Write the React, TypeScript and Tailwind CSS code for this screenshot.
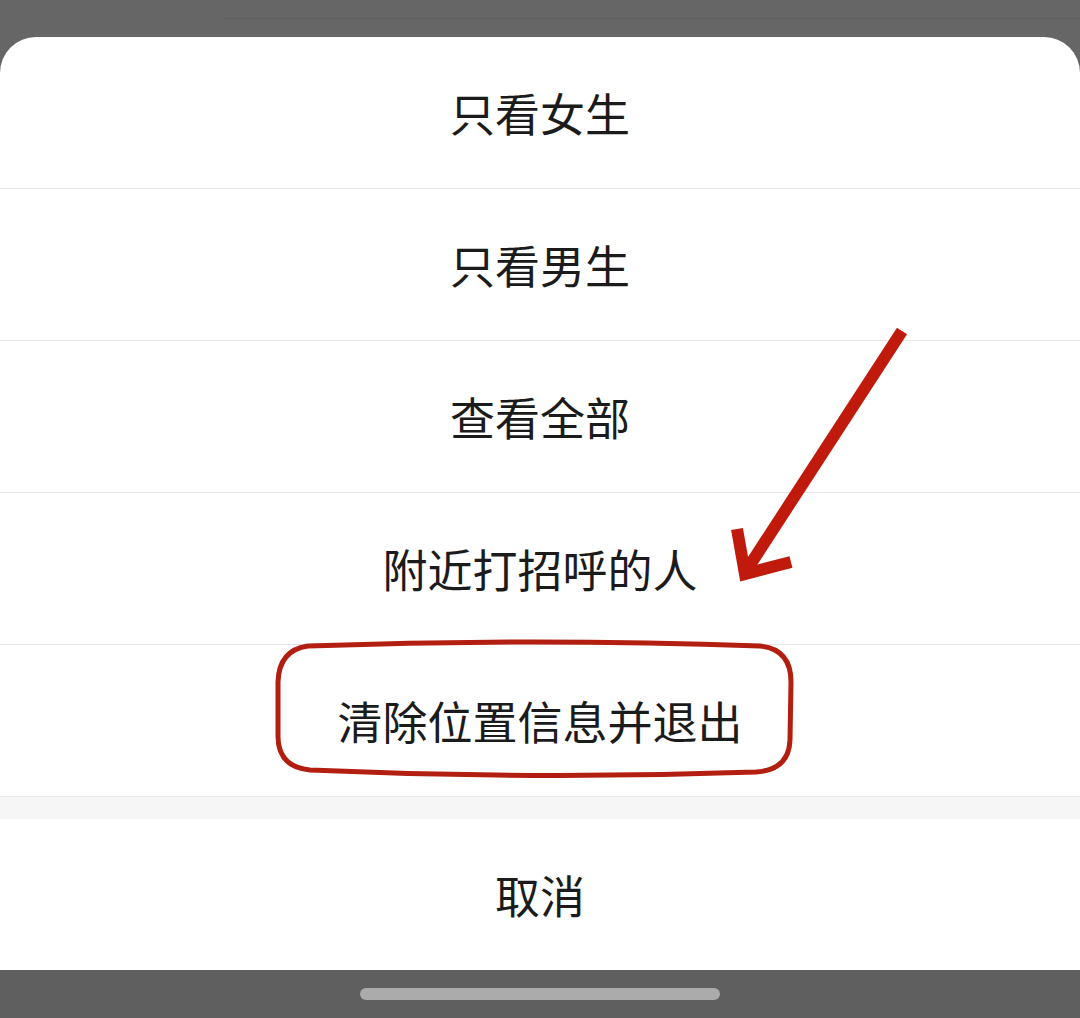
const options: string[] = ['只看女生', '只看男生', '查看全部', '附近打招呼的人', '清除位置信息并退出']

const font = { fontFamily: '"Noto Sans CJK SC", "Noto Sans", sans-serif' }

const App = () => {
  return (
    <div className="relative w-full h-[1018px] flex flex-col bg-[#666666] overflow-hidden" style={font}>
      {/* dimmed page behind the sheet */}
      <div className="h-[37px] shrink-0 pt-[18px] pl-[224px]">
        <div className="h-px bg-[#5e5e5e]" />
      </div>

      {/* action sheet */}
      <div className="flex flex-col bg-white rounded-t-[36px] overflow-hidden">
        <ul>
          {options.map((name, index: number) => (
            <li
              key={index + '' + name}
              className="h-[152px] flex items-center justify-center border-b border-[#e6e6e6] text-[45px] text-[#1b1b1b] leading-none"
            >
              {name}
            </li>
          ))}
        </ul>
        <div className="h-[22px] bg-[#f6f6f6]" />
        <div className="h-[151px] flex items-center justify-center text-[45px] text-[#1b1b1b] leading-none">取消</div>
      </div>

      {/* home indicator */}
      <div className="flex-1 flex items-center justify-center bg-[#5f5f5f]">
        <div className="w-[360px] h-[12px] rounded-full bg-[#ababab]" />
      </div>

      {/* red annotations */}
      <svg className="absolute inset-0 pointer-events-none" width="1080" height="1018" viewBox="0 0 1080 1018">
        <path
          d="M308 646 Q533 638 760 646 Q791 649 791 682 L790 740 Q789 770 756 772 Q533 780 310 770 Q278 767 278 736 L278 682 Q279 650 308 646 Z"
          fill="none"
          stroke="#b21e10"
          strokeWidth="5"
        />
        <line x1="902" y1="331" x2="748" y2="568" stroke="#c01a0c" strokeWidth="12" />
        <polyline points="737,529 745,574 791,562" fill="none" stroke="#c01a0c" strokeWidth="12" strokeLinejoin="miter" />
      </svg>
    </div>
  )
}

export default App
